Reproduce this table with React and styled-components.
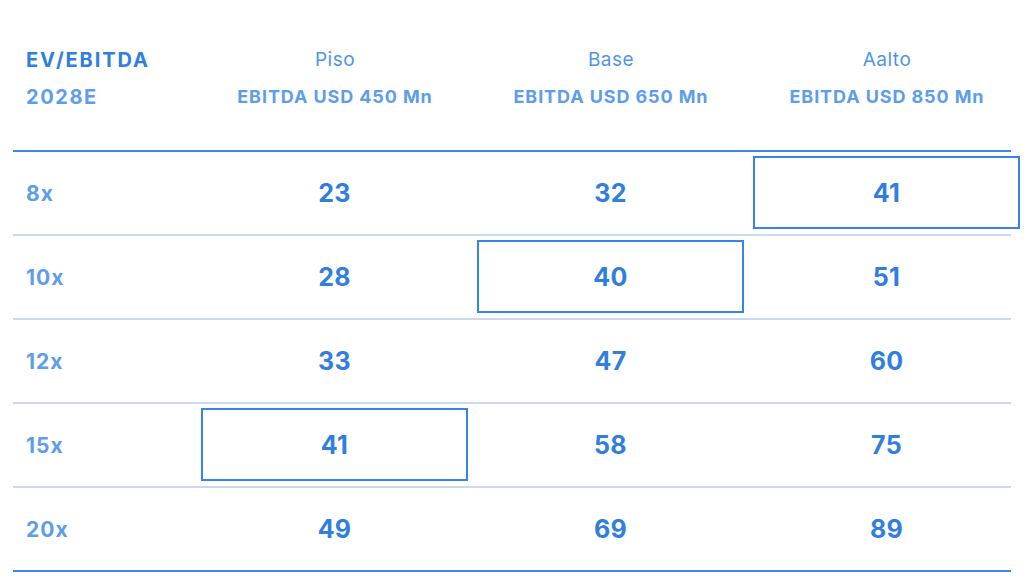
import React from "react";
import styled, { createGlobalStyle } from "styled-components";

const Global = createGlobalStyle`
  html, body { margin: 0; padding: 0; background: #ffffff; overflow: hidden; }
  body { font-family: Inter, "Noto Sans", sans-serif; }
  *, *::before, *::after { box-sizing: border-box; }
`;

const Page = styled.div`
  width: 1024px;
  height: 584px;
  padding-left: 13px;
`;

const Table = styled.div`
  width: 998px;
`;

const Row = styled.div`
  display: grid;
  grid-template-columns: 184px repeat(3, 276px);
  height: ${(p) => p.$h}px;
  border-bottom: 2px solid ${(p) => (p.$strong ? "#3d88e4" : "#cad9ee")};
`;

const HeadCell = styled.div`
  display: flex;
  flex-direction: column;
  align-items: ${(p) => (p.$left ? "flex-start" : "center")};
  padding-top: 48px;
  padding-left: ${(p) => (p.$left ? "13px" : "0")};
  gap: 13px;
`;

const HeadTitle = styled.div`
  font-size: ${(p) => (p.$strong ? "20px" : "19px")};
  line-height: 24px;
  font-weight: ${(p) => (p.$strong ? 700 : 400)};
  letter-spacing: ${(p) => (p.$strong ? "1.9px" : "0.5px")};
  color: ${(p) => (p.$strong ? "#2f7ee0" : "#4f95e8")};
`;

const HeadSub = styled.div`
  font-size: ${(p) => (p.$big ? "20px" : "18px")};
  line-height: 24px;
  font-weight: 700;
  letter-spacing: ${(p) => (p.$big ? "1.6px" : "0.9px")};
  color: #5d9dea;
`;

const Label = styled.div`
  display: flex;
  align-items: center;
  padding-left: 13px;
  font-size: 21px;
  font-weight: 700;
  letter-spacing: 1px;
  color: #5d9dea;
`;

const Cell = styled.div`
  display: flex;
  align-items: center;
  justify-content: center;
`;

const Value = styled.div`
  flex: 1;
  align-self: stretch;
  margin: 4px 5px 5px 4px;
  display: flex;
  align-items: center;
  justify-content: center;
  border: 2px solid ${(p) => (p.$hl ? "#3585e4" : "transparent")};
  font-size: 25px;
  font-weight: 700;
  letter-spacing: 0.3px;
  color: #2f7ee0;
`;

const columns = [
  { name: "Piso", sub: "EBITDA USD 450 Mn" },
  { name: "Base", sub: "EBITDA USD 650 Mn" },
  { name: "Aalto", sub: "EBITDA USD 850 Mn" },
];

const rows = [
  { label: "8x", values: [23, 32, 41], hl: 2 },
  { label: "10x", values: [28, 40, 51], hl: 1 },
  { label: "12x", values: [33, 47, 60], hl: -1 },
  { label: "15x", values: [41, 58, 75], hl: 0 },
  { label: "20x", values: [49, 69, 89], hl: -1 },
];

export default function App() {
  return (
    <Page>
      <Global />
      <Table>
        <Row $h={152} $strong>
          <HeadCell $left>
            <HeadTitle $strong>EV/EBITDA</HeadTitle>
            <HeadSub $big>2028E</HeadSub>
          </HeadCell>
          {columns.map((c) => (
            <HeadCell key={c.name}>
              <HeadTitle>{c.name}</HeadTitle>
              <HeadSub>{c.sub}</HeadSub>
            </HeadCell>
          ))}
        </Row>
        {rows.map((r, i) => (
          <Row key={r.label} $h={84} $strong={i === rows.length - 1}>
            <Label>{r.label}</Label>
            {r.values.map((v, j) => (
              <Cell key={j}>
                <Value $hl={r.hl === j}>{v}</Value>
              </Cell>
            ))}
          </Row>
        ))}
      </Table>
    </Page>
  );
}
